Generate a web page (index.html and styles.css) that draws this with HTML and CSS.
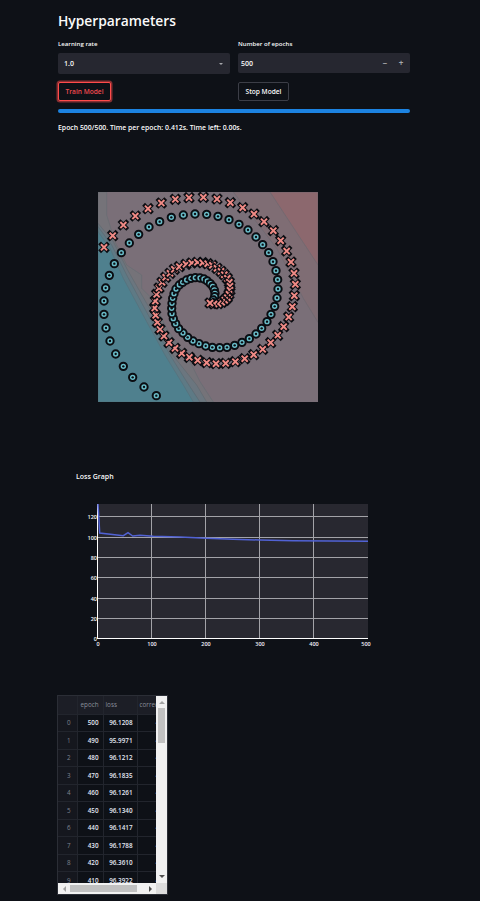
FILE: index.html
```html
<!DOCTYPE html>
<html lang="en">
<head>
  <meta charset="UTF-8">
  <title>Hyperparameters</title>
  <link rel="stylesheet" href="styles.css">
</head>
<body>
<div class="container">
  <h1>Hyperparameters</h1>

  <div class="inputs">
    <div class="field">
      <label>Learning rate</label>
      <div class="select">
        <span>1.0</span>
        <span class="caret"></span>
      </div>
    </div>
    <div class="field">
      <label>Number of epochs</label>
      <div class="number">
        <span>500</span>
        <span class="steppers"><span class="step">&minus;</span><span class="step">+</span></span>
      </div>
    </div>
    <div><button class="btn btn-train">Train Model</button></div>
    <div><button class="btn">Stop Model</button></div>
  </div>

  <div class="progress"></div>
  <p class="status">Epoch 500/500. Time per epoch: 0.412s. Time left: 0.00s.</p>

  <svg class="scatter" id="scatter" width="220" height="210" viewBox="24 21 660 630">
    <rect x="24" y="21" width="660" height="630" fill="#7a6f78"/>
    <polygon points="430,21 684,21 684,412 640,340 560,190" fill="#7f6d74" stroke="#6c6870" stroke-width="2"/>
    <polygon points="540,21 684,21 684,240" fill="#8c686e" stroke="#6c6870" stroke-width="2"/>
    <polygon points="24,21 50,21 50,90 75,170 110,240 155,270 155,310 190,345 230,430 300,530 330,590 370,651 24,651" fill="#757379" stroke="#666c72" stroke-width="2"/>
    <polygon points="24,115 70,170 110,250 150,320 190,390 240,500 320,600 350,651 24,651" fill="#6b767f" stroke="#60696f" stroke-width="2"/>
    <polygon points="24,125 65,180 110,270 180,400 240,510 290,590 330,651 24,651" fill="#5e7a85" stroke="#5a6a72" stroke-width="2"/>
    <polygon points="24,140 60,190 100,280 170,410 225,510 280,600 310,651 24,651" fill="#4f808e" stroke="#56707a" stroke-width="2"/>
  </svg>

  <p class="chart-title">Loss Graph</p>
  <svg class="chart" width="320" height="150" viewBox="60 500 320 150">
    <rect x="97.5" y="504" width="270.5" height="134.5" fill="#282830"/>
    <g class="grid">
      <line x1="151.5" y1="504" x2="151.5" y2="638"/>
      <line x1="205.5" y1="504" x2="205.5" y2="638"/>
      <line x1="259.5" y1="504" x2="259.5" y2="638"/>
      <line x1="313.5" y1="504" x2="313.5" y2="638"/>
      <line x1="98" y1="516.5" x2="368" y2="516.5"/>
      <line x1="98" y1="537.5" x2="368" y2="537.5"/>
      <line x1="98" y1="557.5" x2="368" y2="557.5"/>
      <line x1="98" y1="577.5" x2="368" y2="577.5"/>
      <line x1="98" y1="598.5" x2="368" y2="598.5"/>
      <line x1="98" y1="618.5" x2="368" y2="618.5"/>
    </g>
    <line class="axis" x1="97.5" y1="504" x2="97.5" y2="639"/>
    <line class="axis" x1="97" y1="638.5" x2="368" y2="638.5"/>
    <path class="loss" d="M98 504 L99 520 L99.7 533 L123.3 535.7 L128 532.7 L132.7 536 L140 535.3 L153.3 536.3 L180 537 L206.7 538.3 L233 539.3 L260 540 L293 540.7 L368 541.3"/>
    <g class="ticks-y">
      <text x="97" y="519">120</text>
      <text x="97" y="539.5">100</text>
      <text x="97" y="560">80</text>
      <text x="97" y="580">60</text>
      <text x="97" y="600.5">40</text>
      <text x="97" y="621">20</text>
      <text x="97" y="641">0</text>
    </g>
    <g class="ticks-x">
      <text x="98" y="646">0</text>
      <text x="152" y="646">100</text>
      <text x="206" y="646">200</text>
      <text x="260" y="646">300</text>
      <text x="314" y="646">400</text>
      <text x="366" y="646">500</text>
    </g>
  </svg>

  <div class="frame">
    <div class="table-view">
      <table>
        <thead>
          <tr><th></th><th>epoch</th><th class="left">loss</th><th class="left">correct</th></tr>
        </thead>
        <tbody>
          <tr><td>0</td><td>500</td><td>96.1208</td><td>4</td></tr>
          <tr><td>1</td><td>490</td><td>95.9971</td><td>4</td></tr>
          <tr><td>2</td><td>480</td><td>96.1212</td><td>4</td></tr>
          <tr><td>3</td><td>470</td><td>96.1835</td><td>4</td></tr>
          <tr><td>4</td><td>460</td><td>96.1261</td><td>4</td></tr>
          <tr><td>5</td><td>450</td><td>96.1340</td><td>4</td></tr>
          <tr><td>6</td><td>440</td><td>96.1417</td><td>4</td></tr>
          <tr><td>7</td><td>430</td><td>96.1788</td><td>4</td></tr>
          <tr><td>8</td><td>420</td><td>96.3610</td><td>4</td></tr>
          <tr><td>9</td><td>410</td><td>96.3922</td><td>4</td></tr>
        </tbody>
      </table>
    </div>
    <div class="vbar">
      <span class="arrow-up"></span>
      <span class="vthumb"></span>
      <span class="arrow-down"></span>
    </div>
    <div class="hbar">
      <span class="arrow-left"></span>
      <span class="hthumb"></span>
      <span class="arrow-right"></span>
    </div>
    <div class="corner"></div>
  </div>
</div>
<script src="script.js"></script>
</body>
</html>
```

FILE: styles.css
```css
* {
  box-sizing: border-box;
  font-family: "Open Sans", "Noto Sans", sans-serif;
}
html, body {
  margin: 0;
  background: #0e1117;
  color: #fafafa;
}
body {
  height: 901px;
  overflow: hidden;
}
.container {
  width: 352px;
  margin-left: 58px;
}
h1 {
  margin: 0;
  padding-top: 11px;
  font-size: 13.8px;
  line-height: 19px;
  font-weight: 600;
}

.inputs {
  display: grid;
  grid-template-columns: 172px 172px;
  column-gap: 8px;
  row-gap: 8px;
  margin-top: 9px;
}
.field label {
  display: block;
  font-size: 6.1px;
  line-height: 9px;
  font-weight: 600;
  margin-bottom: 5px;
}
.select, .number {
  display: flex;
  justify-content: space-between;
  align-items: center;
  background: #262730;
  border-radius: 2px;
  font-size: 7px;
  font-weight: 600;
}
.select {
  height: 21px;
  padding: 0 6px;
}
.number {
  height: 20px;
  padding: 0 3px;
}
.caret {
  width: 0;
  height: 0;
  margin-right: 1px;
  border-left: 2px solid transparent;
  border-right: 2px solid transparent;
  border-top: 2px solid #a6a7ab;
}
.steppers {
  display: flex;
  gap: 10px;
  padding-right: 3px;
}
.step {
  width: 6px;
  text-align: center;
  font-size: 8px;
  line-height: 8px;
  font-weight: 700;
  color: #a6a7ab;
}
.btn {
  display: block;
  height: 19px;
  padding: 0 6.5px;
  background: #0e1117;
  color: #fafafa;
  border: 1px solid #3c3e47;
  border-radius: 2px;
  font-size: 6.6px;
  font-weight: 600;
}
.btn-train {
  color: #f04a4f;
  border-color: #ff4b4b;
  box-shadow: 0 0 0 1.5px rgba(255, 75, 75, .5);
}
.progress {
  height: 4px;
  margin-top: 8px;
  background: #1c83e1;
  border-radius: 2px;
}
.status {
  margin: 10px 0 0;
  font-size: 6.9px;
  line-height: 10px;
  font-weight: 600;
}
.scatter {
  display: block;
  margin: 59px 0 0 40px;
}
.chart-title {
  margin: 70px 0 0 18px;
  font-size: 7px;
  line-height: 10px;
  font-weight: 600;
}
.chart {
  display: block;
  margin: 18px 0 0 2px;
}
.grid line {
  stroke: #a3a3a8;
  stroke-width: 1;
}
.axis {
  stroke: #fff;
  stroke-width: 1;
}
.loss {
  fill: none;
  stroke: #5162d4;
  stroke-width: 1.5;
}
.chart text {
  fill: #f2f5fa;
  font-size: 5.5px;
  font-weight: 600;
}
.ticks-y text {
  text-anchor: end;
}
.ticks-x text {
  text-anchor: middle;
}

.frame {
  display: grid;
  grid-template-columns: 98px 11px;
  grid-template-rows: 187px 11px;
  width: 109px;
  height: 198px;
  margin-top: 46px;
  background: #0e1117;
  outline: 1px solid #2b2e36;
}
.table-view {
  overflow: hidden;
}
table {
  width: 110px;
  table-layout: fixed;
  border-collapse: collapse;
  font-size: 6.3px;
}
th:nth-child(1), td:nth-child(1) { width: 19px; }
th:nth-child(2), td:nth-child(2) { width: 26px; }
th:nth-child(3), td:nth-child(3) { width: 34px; }
th:nth-child(4), td:nth-child(4) { width: 31px; }
th {
  height: 18px;
  padding: 0 2px;
  background: #1c1e26;
  color: #8b8f9b;
  font-weight: 400;
  text-align: left;
  white-space: nowrap;
  overflow: hidden;
  border: 1px solid #22252d;
  border-width: 0 1px 1px 0;
}
th:nth-child(2) {
  padding-left: 3px;
}
td {
  height: 17.5px;
  padding: 0 4px;
  text-align: right;
  color: #e3e8f4;
  font-weight: 600;
  border: 1px solid #22252d;
  border-width: 0 1px 1px 0;
  background: #0e1117;
}
td:first-child {
  color: #7f8490;
  font-weight: 400;
  background: #15171e;
  padding-right: 6px;
}
td:last-child {
  text-align: left;
  padding-left: 18px;
  color: #8b8f9b;
}
.vbar, .hbar {
  position: relative;
  background: #f1f1f1;
}
.vthumb {
  position: absolute;
  left: 2px;
  top: 12px;
  width: 7px;
  height: 35px;
  background: #c1c1c1;
}
.hthumb {
  position: absolute;
  left: 12px;
  top: 2px;
  width: 67px;
  height: 7px;
  background: #c1c1c1;
}
.corner {
  background: #dcdcdc;
}
.arrow-up, .arrow-down, .arrow-left, .arrow-right {
  position: absolute;
  width: 0;
  height: 0;
  border: 3px solid transparent;
}
.arrow-up { left: 2.5px; top: 2px; border-bottom-color: #a3a3a3; }
.arrow-down { left: 2.5px; bottom: 2px; border-top-color: #505050; }
.arrow-left { left: 2px; top: 2.5px; border-right-color: #a3a3a3; }
.arrow-right { right: 1px; top: 2.5px; border-left-color: #505050; }
```

FILE: script.js
```js
// marker positions read off the plot, in viewBox units (3 per pixel)
const blue = [
  [199,632],[162,606],[128,577],[100,544],[77,507],[60,468],[48,429],[42,388],[42,348],[47,309],
  [58,271],[73,236],[94,203],[118,174],[146,148],[177,126],[209,110],[244,97],[280,90],[315,87],
  [350,88],[384,94],[417,104],[447,118],[474,135],[498,156],[518,179],[536,203],[549,230],[558,257],
  [563,284],[564,312],[561,339],[554,364],[543,388],[531,410],[515,430],[498,447],[478,461],[456,472],
  [434,481],[411,487],[389,488],[367,487],[347,483],[327,476],[309,468],[293,457],[279,444],[266,431],
  [257,416],[250,401],[246,386],[245,370],[246,355],[248,340],[252,326],[258,312],[268,300],[278,292],
  [290,285],[303,280],[316,278],[330,279],[342,282],[352,288],[361,296],[368,304],[373,315],[375,325],
  [374,335],[370,345]
];
const red = [
  [42,187],[68,152],[100,120],[136,93],[174,71],[214,54],[256,43],[297,38],[340,37],[381,42],
  [421,53],[458,68],[492,87],[522,110],[550,137],[572,167],[590,198],[603,231],[612,265],[616,298],
  [613,332],[607,365],[596,396],[581,425],[563,451],[542,473],[518,493],[491,509],[464,521],[436,530],
  [407,535],[378,536],[350,533],[323,526],[298,517],[275,505],[255,490],[237,473],[222,453],[210,433],
  [202,412],[197,391],[194,369],[196,348],[200,328],[207,309],[216,292],[227,277],[240,265],[253,253],
  [268,245],[288,238],[305,234],[322,232],[338,233],[353,236],[367,241],[381,250],[393,259],[403,269],
  [412,280],[418,292],[420,304],[420,316],[417,328],[412,338],[404,346],[395,352],[384,356],[372,357],[360,354]
];

const svg = document.querySelector('#scatter');
const NS = 'http://www.w3.org/2000/svg';
const dark = '#0b0d12';

function add(name, attrs) {
  let el = document.createElementNS(NS, name);
  for (let key in attrs) el.setAttribute(key, attrs[key]);
  svg.appendChild(el);
}

function cross(x, y, arm, color, width) {
  let d = `M${x-arm} ${y-arm} L${x+arm} ${y+arm} M${x-arm} ${y+arm} L${x+arm} ${y-arm}`;
  add('path', {d: d, stroke: color, 'stroke-width': width, fill: 'none', 'stroke-linecap': 'square'});
}

blue.forEach(p => {
  add('circle', {cx: p[0], cy: p[1], r: 11, fill: '#69bcc8', stroke: dark, 'stroke-width': 6});
  add('circle', {cx: p[0], cy: p[1], r: 3.5, fill: dark});
});

// drawn one after the other, so later markers cover earlier ones
red.forEach(p => {
  cross(p[0], p[1], 9, dark, 12);
  cross(p[0], p[1], 7, '#f08a85', 6);
});
```
